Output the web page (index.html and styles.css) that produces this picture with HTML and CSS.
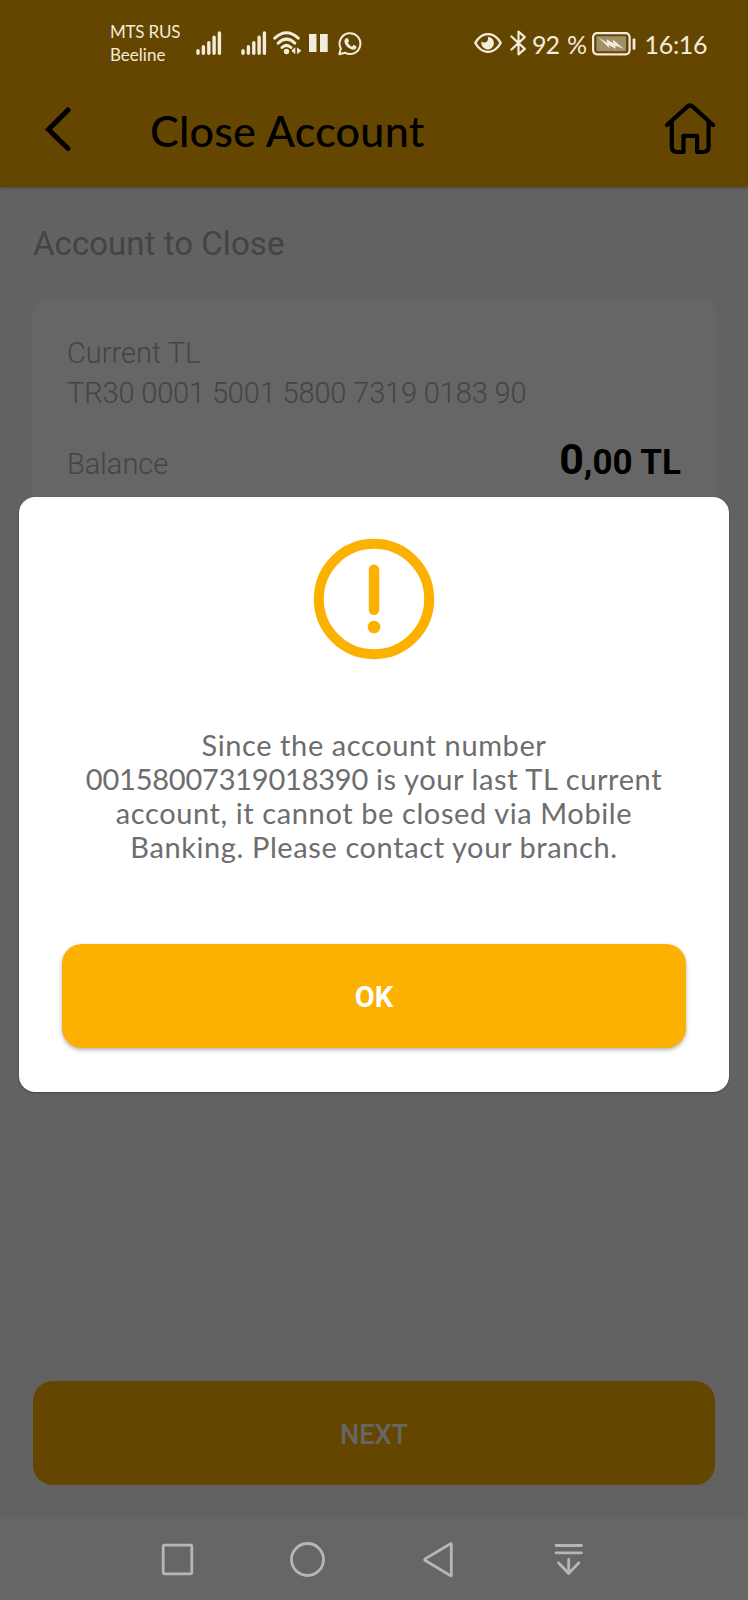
FILE: index.html
```html
<!DOCTYPE html>
<html lang="en">
<head>
  <meta charset="UTF-8">
  <meta name="viewport" content="width=device-width, initial-scale=1.0">
  <title>Close Account</title>
  <link rel="stylesheet" href="styles.css">
</head>
<body>
  <div class="screen">
    <header class="header">
      <div class="status-bar">
        <div class="carriers">
          <div class="mts">MTS RUS</div>
          <div class="beeline">Beeline</div>
        </div>
        <svg class="signal" width="26" height="24" viewBox="0 0 26 24">
          <path d="M2 22.2v-2.4M7.4 22.2v-6.4M12.8 22.2v-10.4M18.1 22.2V6.2M23.4 22.2V2"/>
        </svg>
        <svg class="signal second" width="26" height="24" viewBox="0 0 26 24">
          <path d="M2 22.2v-2.4M7.4 22.2v-6.4M12.8 22.2v-10.4M18.1 22.2V6.2M23.4 22.2V2"/>
        </svg>
        <svg class="wifi" width="29" height="24" viewBox="0 0 29 24">
          <path class="line" d="M1.8 7.2Q13.5-3.6 25.2 7.2M5.2 12.1Q13.5 4.3 21.8 12.1M9 16.5Q13.5 12.3 18 16.5"/>
          <circle cx="13.5" cy="20.5" r="2.7"/>
          <path d="M22.3 16.2v7l-4-3.5zM24 16.2v7l4.4-3.5z"/>
        </svg>
        <svg class="pause" width="19" height="18" viewBox="0 0 19 18">
          <path d="M0 0h7.5v18H0zM11 0h7.7v18H11z"/>
        </svg>
        <svg class="whatsapp" width="24" height="24" viewBox="0 0 24 24">
          <path class="line" d="M1.3 22.3l1.5-5.8a10.4 10.4 0 1 1 4.1 4.2z"/>
          <path d="M8.3 6.2h1.1c.4 0 .6.2.7.5l.9 2.2c.1.3 0 .6-.2.8l-.9 1.1c.9 1.8 2.3 3.1 4.1 3.9l1.2-1.4c.2-.3.5-.3.8-.2l2.2 1.1c.3.2.4.4.3.8-.3 1.8-1.6 2.7-3.1 2.7-4 0-9-4.6-9-8.4 0-1.4.7-2.6 1.9-3.1z"/>
        </svg>
        <svg class="eye" width="28" height="20" viewBox="0 0 28 20">
          <path class="line" d="M1.3 10C8-1.8 20-1.8 26.7 10 20 21.8 8 21.8 1.3 10z"/>
          <path d="M13.6 3.8a6.3 6.3 0 1 1-6 4.5c1.3 1.8 4.9 1.7 5.9-.5.6-1.4.8-2.9.1-4z"/>
        </svg>
        <svg class="bluetooth" width="17" height="26" viewBox="0 0 17 26">
          <path d="M1.5 6.5l13.3 12.4-6.3 5.4V1.7l6.3 5.4L1.5 19.5"/>
        </svg>
        <div class="percent">92 %</div>
        <svg class="battery" width="44" height="24" viewBox="0 0 44 24">
          <rect class="shell" x="1.1" y="1.1" width="36.5" height="21.2" rx="4"/>
          <rect class="charge" x="4.5" y="4.3" width="29.5" height="15" rx="1"/>
          <path d="M6.5 5.5l8.7 5.2-.5-3.5 6.6 4-.5-3.7L32 17l-8.8-3.5.6 3.3-7.1-3.8.7 3.3z"/>
          <rect x="40.6" y="6.5" width="2.8" height="11.2" rx="1"/>
        </svg>
        <div class="clock">16:16</div>
      </div>
      <div class="title-bar">
        <svg class="back" width="28" height="46" viewBox="0 0 28 46">
          <path d="M24 4L4.5 23.5 24 42.5"/>
        </svg>
        <h1>Close Account</h1>
        <svg class="home" width="52" height="52" viewBox="0 0 52 52">
          <path d="M3 22L23.3 3.6q2.7-2.2 5.4 0L49 22M7.8 19v24.5q0 5.5 5.5 5.5h6.2V32.8h13.6V49h6q5.5 0 5.5-5.5V19"/>
        </svg>
      </div>
    </header>

    <main class="content">
      <h2>Account to Close</h2>
      <div class="card">
        <div class="account-name">Current TL</div>
        <div class="iban">TR30 0001 5001 5800 7319 0183 90</div>
        <div class="balance">
          <span>Balance</span>
          <strong><span class="whole">0</span>,00 TL</strong>
        </div>
      </div>
      <button class="next">NEXT</button>
    </main>

    <nav class="nav-bar">
      <svg width="36" height="36" viewBox="0 0 36 36">
        <rect x="3.2" y="3.2" width="28.6" height="28.6" rx="1"/>
      </svg>
      <svg width="36" height="36" viewBox="0 0 36 36">
        <circle cx="17.5" cy="17.5" r="16"/>
      </svg>
      <svg width="36" height="36" viewBox="0 0 36 36">
        <path d="M31.3 2.3v31q0 .8-.8.3L5.2 18.5q-1.2-.8 0-1.6L30.5 1.8q.8-.4.8.5z"/>
      </svg>
      <svg width="36" height="36" viewBox="0 0 36 36">
        <path d="M6 3.5h25.5M6 10.8h25.5M18.7 17.5v14M8.5 20.7l10.2 10.8 10.2-10.8"/>
      </svg>
    </nav>

    <div class="dialog">
      <svg class="alert" width="122" height="122" viewBox="0 0 122 122">
        <circle class="ring" cx="61" cy="61" r="55.2"/>
        <rect x="55.8" y="26.5" width="10.4" height="50.5" rx="5.2"/>
        <circle cx="61" cy="89" r="6.3"/>
      </svg>
      <p>
        Since the account number<br>
        <span class="number">00158007319018390</span> is your last TL current<br>
        account, it cannot be closed via Mobile<br>
        Banking. Please contact your branch.
      </p>
      <button class="ok">OK</button>
    </div>
  </div>
</body>
</html>
```
FILE: styles.css
```css
body {
  margin: 0;
  font-family: Roboto, sans-serif;
}

.screen {
  position: relative;
  display: flex;
  flex-direction: column;
  width: 748px;
  height: 1600px;
  overflow: hidden;
  background: #626262;
}

svg {
  display: block;
  flex: none;
}

/* header */
.header {
  height: 187px;
  background: #644600;
  box-shadow: 0 1px 3px rgba(0, 0, 0, 0.25);
}

.status-bar {
  display: flex;
  align-items: flex-start;
  box-sizing: border-box;
  height: 86px;
  padding: 20px 0 0 110px;
  font-family: Lato, sans-serif;
  color: #f3ebdc;
  fill: #f3ebdc;
  white-space: nowrap;
}

.carriers {
  width: 86px;
  font-size: 17px;
  line-height: 23px;
}

.mts {
  letter-spacing: -0.2px;
}

.signal,
.wifi .line,
.whatsapp .line,
.eye .line,
.bluetooth {
  fill: none;
  stroke: #f3ebdc;
  stroke-linecap: round;
  stroke-linejoin: round;
}

.signal {
  margin-top: 11px;
  stroke-width: 3.4;
}

.signal.second {
  margin-left: 19px;
}

.wifi {
  margin: 11px 0 0 6px;
  stroke-width: 3;
}

.pause {
  margin: 14px 0 0 6.5px;
}

.whatsapp {
  margin: 12px 0 0 10.5px;
  stroke-width: 2;
}

.eye {
  margin: 13px 0 0 112px;
  stroke-width: 2.4;
}

.bluetooth {
  margin: 10px 0 0 8px;
  stroke-width: 2.2;
}

.percent,
.clock {
  height: 32px;
  margin-top: 8px;
  font-size: 25px;
  line-height: 32px;
}

.percent {
  width: 53px;
  margin-left: 5px;
  letter-spacing: -1px;
  word-spacing: 2.5px;
}

.battery {
  margin: 12px 0 0 6.5px;
}

.battery .shell {
  fill: none;
  stroke: #f3ebdc;
  stroke-width: 2.2;
}

.battery .charge {
  fill: #a28e68;
}

.clock {
  margin-left: 9px;
  letter-spacing: -0.3px;
}

.title-bar {
  display: flex;
  align-items: flex-start;
}

.back {
  margin: 20px 0 0 44px;
  fill: none;
  stroke: #000;
  stroke-width: 5;
  stroke-linecap: round;
}

h1 {
  width: 514px;
  margin: 19px 0 0 78px;
  font: 500 43px/52px Lato, sans-serif;
  letter-spacing: 0.25px;
  color: #000;
  white-space: nowrap;
}

.home {
  margin-top: 17px;
  fill: none;
  stroke: #000;
  stroke-width: 4.2;
  stroke-linecap: round;
  stroke-linejoin: round;
}

/* page behind the dialog */
.content {
  display: flex;
  flex: 1;
  flex-direction: column;
  padding: 0 33px 33px;
}

h2 {
  margin: 38px 0 0;
  font-size: 33px;
  font-weight: 400;
  line-height: 38px;
  letter-spacing: 0.05px;
  color: #444;
}

.card {
  box-sizing: border-box;
  height: 330px;
  margin-top: 36px;
  padding: 34px 34px 0;
  border-radius: 14px 14px 0 0;
  background: linear-gradient(#666 200px, #626262 200px);
  font-size: 29px;
  font-weight: 300;
  line-height: 40px;
  color: #444;
}

.iban {
  letter-spacing: -0.15px;
}

.balance {
  display: flex;
  align-items: baseline;
  justify-content: space-between;
  margin-top: 26px;
}

.balance strong {
  font-size: 35px;
  font-weight: 700;
  color: #000;
}

.balance .whole {
  font-size: 43px;
}

button {
  height: 104px;
  border: none;
  border-radius: 20px;
  font-family: Roboto, sans-serif;
  cursor: pointer;
}

.next {
  margin-top: auto;
  padding-top: 4px;
  background: #644600;
  font-size: 27px;
  font-weight: 500;
  color: #666;
}

.nav-bar {
  display: flex;
  gap: 94px;
  box-sizing: border-box;
  height: 82px;
  padding: 24px 0 0 159.5px;
  background: #666;
  fill: none;
  stroke: #b6b6b6;
  stroke-width: 2.8;
  stroke-linecap: round;
  stroke-linejoin: round;
}

/* dialog */
.dialog {
  position: absolute;
  top: 497px;
  left: 19px;
  display: flex;
  flex-direction: column;
  align-items: center;
  box-sizing: border-box;
  width: 710px;
  height: 595px;
  padding: 41px 43px 44px;
  border-radius: 16px;
  background: #fff;
  box-shadow: 0 1px 2px rgba(0, 0, 0, 0.3);
}

.alert {
  fill: #fcb000;
}

.alert .ring {
  fill: none;
  stroke: #fcb000;
  stroke-width: 10;
}

.dialog p {
  margin: 68px 0 0;
  font: 400 29px/34px Lato, sans-serif;
  letter-spacing: 0.6px;
  color: #6d6d6d;
  text-align: center;
  white-space: nowrap;
}

.dialog .number {
  letter-spacing: -0.22px;
}

.ok {
  width: 624px;
  margin-top: auto;
  padding-top: 3px;
  background: #fcb000;
  box-shadow: 0 2px 4px rgba(0, 0, 0, 0.3);
  font-size: 29px;
  font-weight: 700;
  color: #fff;
}
```
